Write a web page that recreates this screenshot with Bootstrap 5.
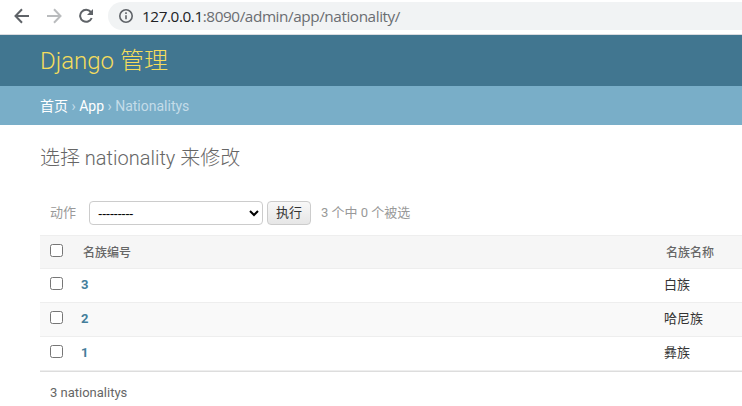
<!DOCTYPE html>
<html lang="zh">
<head>
<meta charset="utf-8">
<title>选择 nationality 来修改</title>
<link href="https://cdn.jsdelivr.net/npm/bootstrap@5.3.0/dist/css/bootstrap.min.css" rel="stylesheet">
<style>
body{font-family:Roboto,"Noto Sans CJK SC",sans-serif;font-size:13px;line-height:16px;color:#333;background:#fff;overflow:hidden}
.browser-bar{height:35px;border-bottom:1px solid #dadce0;padding:2px 0 4px 13px}
.browser-bar svg{display:block;flex:none}
.address{height:28px;background:#f1f3f4;border-radius:14px 0 0 14px;margin-left:13px;padding-left:10px;font:15.3px/28px "Open Sans",sans-serif;color:#6a6d71;white-space:nowrap}
.address .addr-text{margin-left:8px;letter-spacing:-.42px}
.address b{font-weight:400;color:#202124}
.site-head{height:51px;background:#417690;padding-left:40px}
.site-head h1{font-size:24px;line-height:28px;font-weight:300;color:#f5dd5d}
.crumbs{height:39px;background:#79aec8;color:#c4dce8;padding-left:40px;font-size:14px;white-space:pre}
.crumbs a{color:#fff;font-weight:400}
.page-body{padding-left:40px}
.page-body h2{font-size:20px;line-height:24px;font-weight:300;color:#666;margin:21px 0 31px}
.actions{height:24px;margin-bottom:10px;color:#999;padding-left:10px}
.actions select{width:174px;height:24px;border:1px solid #ccc;border-radius:4px;background:#fff;color:#000;font:13.33px "Liberation Sans",sans-serif;letter-spacing:-.55px;padding:0 4px;margin:0 4px 0 13px}
.actions button{width:44px;height:24px;border:1px solid #ccc;border-radius:4px;background:linear-gradient(#f8f8f8,#e6e6e6);font-size:13px;line-height:20px;padding:0;color:#333}
.actions .counter{margin-left:10px}
.result-table{table-layout:fixed;width:702px;border-collapse:separate;border-spacing:0;border-top:1px solid #eee;border-bottom:1px solid #ddd}
.result-table th,.result-table td{height:34px;padding:0 0 2px;border-bottom:1px solid #eee;vertical-align:middle;line-height:16px}
.result-table thead th{height:33px;background:#f6f6f6;color:#666;font-size:12px;font-weight:500;padding:1px 0 0 2px}
.result-table tbody tr:nth-child(2){background:#f9f9f9}
.result-table tbody th{font-weight:700;color:#447e9b}
.result-table .check-cell,.result-table thead .check-cell{padding:0 0 0 10px}
.result-table input{appearance:none;display:block;width:13px;height:13px;border:1px solid #767676;border-radius:2.5px;background:#fff;margin:0 0 3px}
.result-table tbody input{margin-bottom:5px}
.paginator{padding:13px 0 0 10px;color:#666}
</style>
<script src="https://cdn.jsdelivr.net/npm/bootstrap@5.3.0/dist/js/bootstrap.bundle.min.js"></script>
</head>
<body>
<div class="browser-bar d-flex align-items-center">
  <svg width="18" height="18" viewBox="0 0 18 18" fill="none" stroke="#5f6368" stroke-width="2"><path d="M16 9H3M9 2.3 2.5 9 9 15.7"/></svg>
  <svg class="ms-3" width="16" height="18" viewBox="0 0 16 18" fill="none" stroke="#babcbe" stroke-width="2"><path d="M0 9h13M7 2.3 13.5 9 7 15.7"/></svg>
  <svg class="ms-3" width="16" height="18" viewBox="0 0 16 18" fill="none" stroke="#5f6368" stroke-width="2"><path d="M11.8 5A6 6 0 1 0 12.7 11"/><path d="M14 2v6H8z" fill="#5f6368" stroke="none"/></svg>
  <div class="address d-flex align-items-center flex-grow-1">
    <svg width="16" height="16" viewBox="0 0 16 16" fill="none" stroke="#5f6368" stroke-width="1.6"><circle cx="8" cy="8" r="6.2"/><path d="M8 7.2v4M8 4.3v1.6"/></svg>
    <span class="addr-text"><b>127.0.0.1</b>:8090/admin/app/nationality/</span>
  </div>
</div>
<header class="site-head d-flex align-items-center"><h1 class="m-0">Django 管理</h1></header>
<nav class="crumbs d-flex align-items-center"><a class="text-decoration-none">首页</a> › <a class="text-decoration-none">App</a> › Nationalitys</nav>
<main class="page-body">
  <h2>选择 nationality 来修改</h2>
  <div class="actions d-flex align-items-center">
    <span>动作</span>
    <select><option>---------</option></select>
    <button type="button">执行</button>
    <span class="counter">3 个中 0 个被选</span>
  </div>
  <table class="result-table">
    <colgroup><col style="width:41px"><col style="width:583px"><col></colgroup>
    <thead><tr><th class="check-cell"><input type="checkbox"></th><th>名族编号</th><th>名族名称</th></tr></thead>
    <tbody>
      <tr><td class="check-cell"><input type="checkbox"></td><th>3</th><td>白族</td></tr>
      <tr><td class="check-cell"><input type="checkbox"></td><th>2</th><td>哈尼族</td></tr>
      <tr><td class="check-cell"><input type="checkbox"></td><th>1</th><td>彝族</td></tr>
    </tbody>
  </table>
  <div class="paginator">3 nationalitys</div>
</main>
</body>
</html>
